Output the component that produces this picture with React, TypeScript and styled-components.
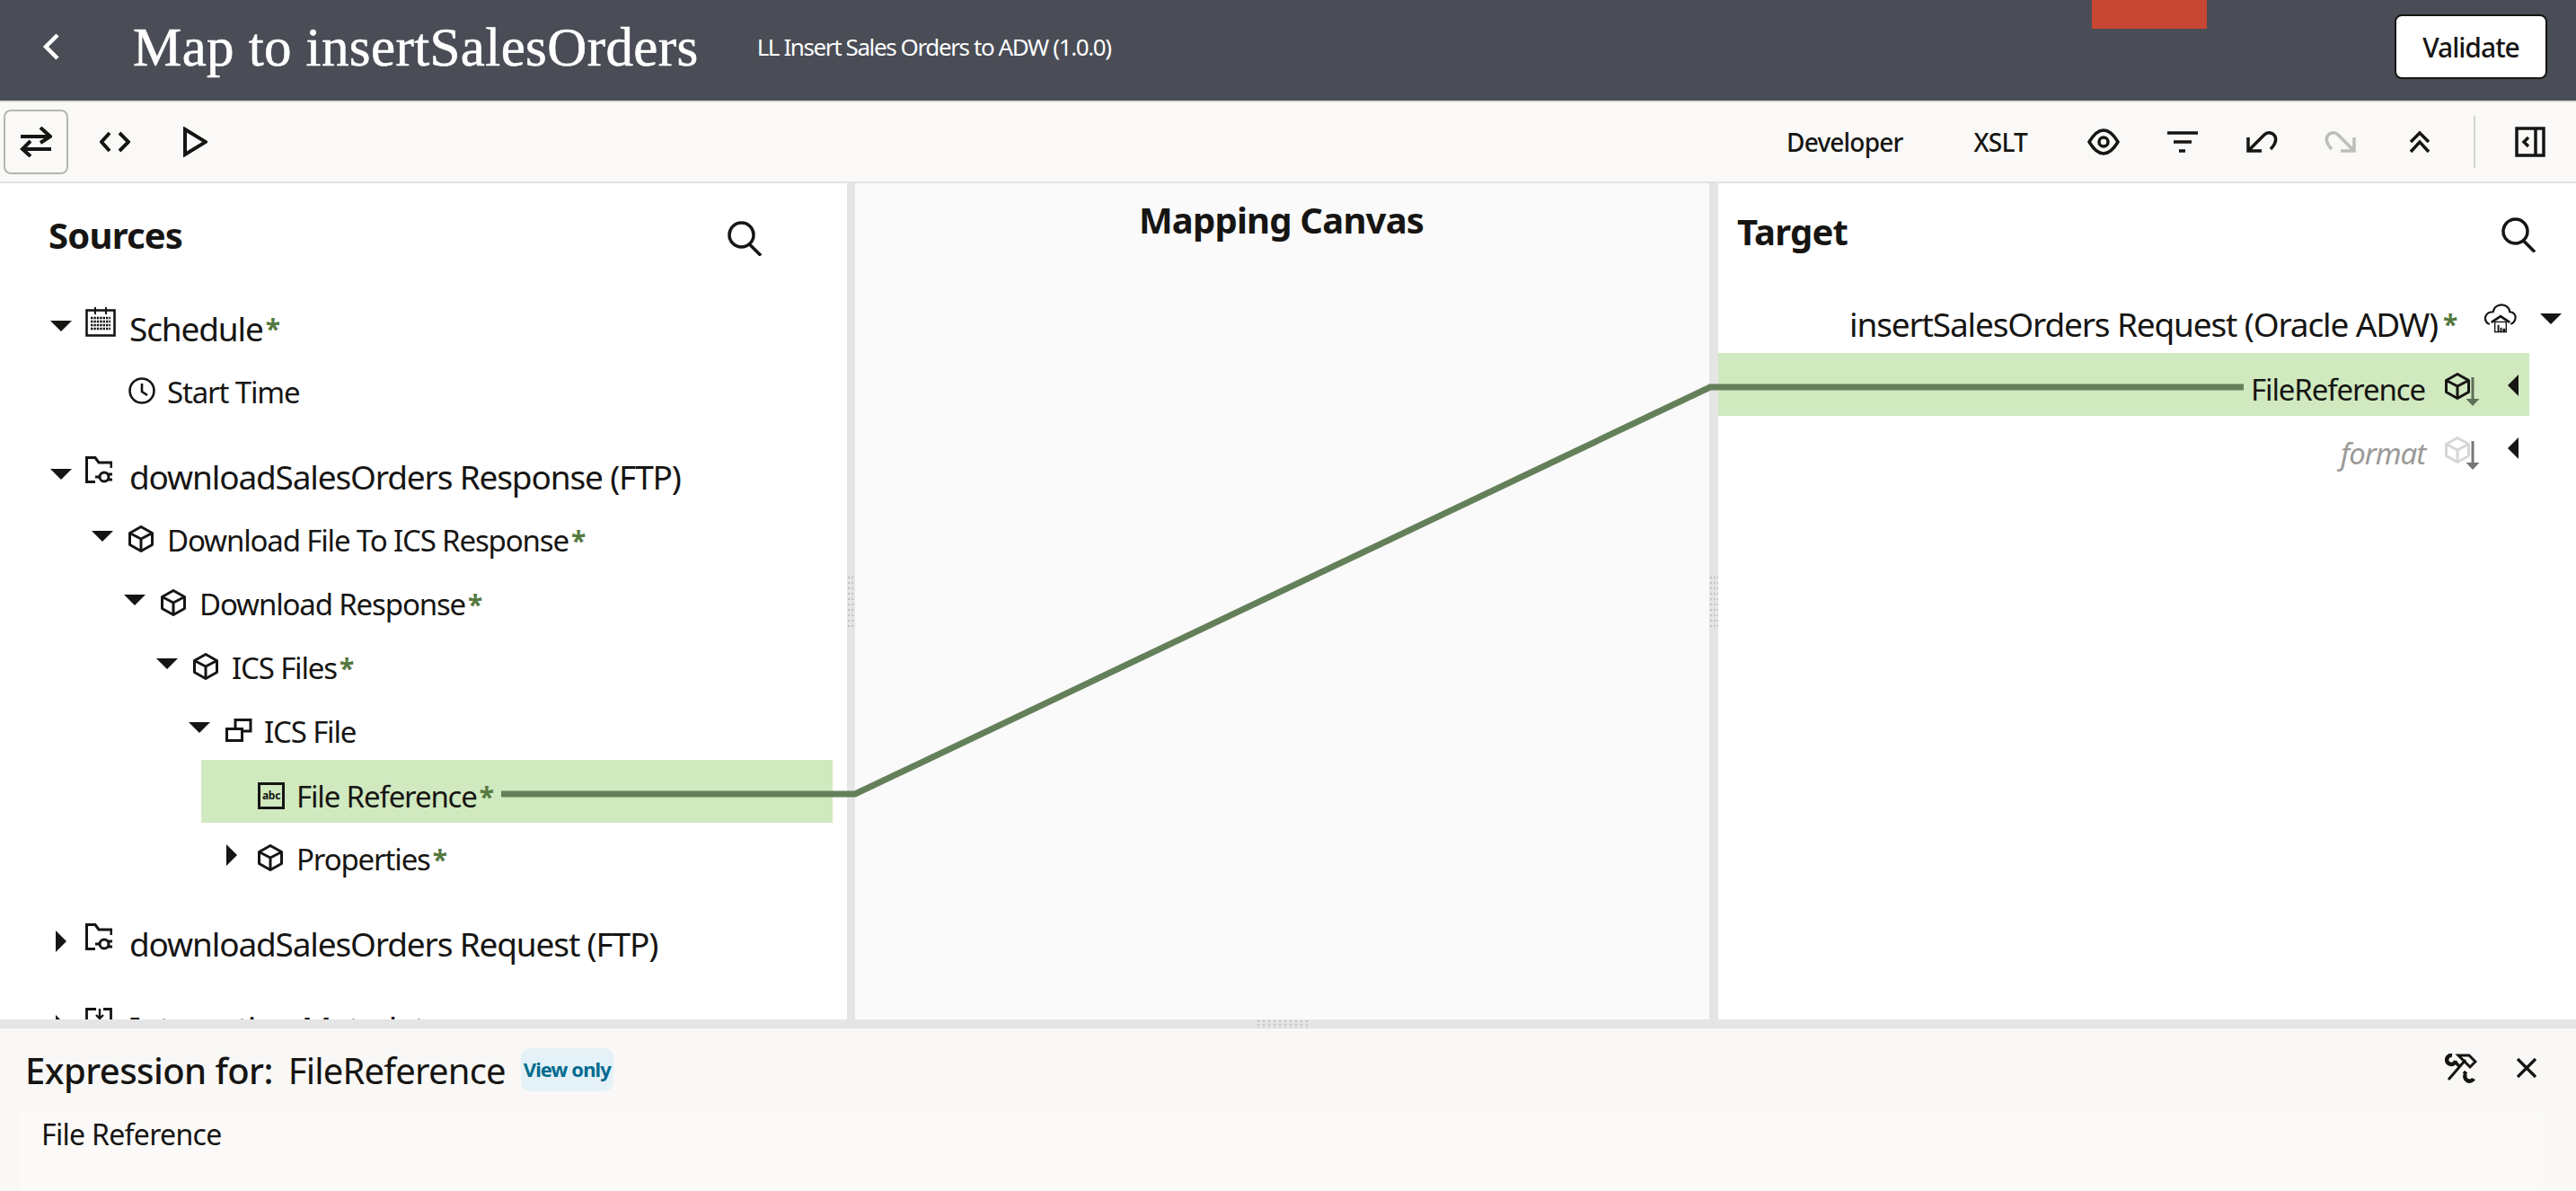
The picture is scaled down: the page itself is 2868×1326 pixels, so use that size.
import React from 'react';
import styled, { createGlobalStyle } from 'styled-components';

const GlobalStyle = createGlobalStyle`
  html, body {
    margin: 0;
    padding: 0;
    background: #fff;
    font-family: "Noto Sans", "Open Sans", sans-serif;
    color: #161513;
  }
`

const Page = styled.div`
  width: 2868px;
  height: 1326px;
  display: flex;
  flex-direction: column;
  overflow: hidden;
`

const Header = styled.header`
  position: relative;
  flex: none;
  height: 104px;
  padding-bottom: 8px;
  display: flex;
  align-items: center;
  background: #4a4d56;
  border-bottom: 2px solid #dfe0d2;
`

const BackButton = styled.button`
  border: 0;
  background: none;
  padding: 0;
  margin: 0 80px 0 46px;
  display: flex;
  color: #fff;
`

const Title = styled.h1`
  margin: 0 65px 0 0;
  font-family: "Liberation Serif", serif;
  font-weight: 400;
  font-size: 61px;
  letter-spacing: 0.4px;
  line-height: 1;
  color: #fff;
  -webkit-text-stroke: 0.6px #fff;
`

const Subtitle = styled.span`
  font-size: 26px;
  letter-spacing: -1.4px;
  color: #fff;
`

const RedTab = styled.div`
  position: absolute;
  top: 0;
  left: 2329px;
  width: 128px;
  height: 32px;
  background: #c74634;
`

const ValidateButton = styled.button`
  margin-left: auto;
  margin-right: 32px;
  width: 170px;
  height: 72px;
  border: 2px solid #161513;
  border-radius: 8px;
  background: #fff;
  font: 500 30px "Noto Sans", sans-serif;
  letter-spacing: -1px;
  color: #161513;
`

const Toolbar = styled.div`
  flex: none;
  height: 88px;
  display: flex;
  align-items: center;
  background: #faf9f7;
  border-bottom: 2px solid #e2e2e0;
`

const ActiveToolButton = styled.button`
  width: 72px;
  height: 72px;
  margin: 0 8px 0 4px;
  padding: 0;
  display: flex;
  align-items: center;
  justify-content: center;
  background: #faf9f7;
  border: 2px solid #b5b5b2;
  border-radius: 8px;
`

const ToolButton = styled.button`
  width: 88px;
  height: 72px;
  padding: 0;
  display: flex;
  align-items: center;
  justify-content: center;
  background: none;
  border: 0;
  color: #161513;
`

const ToolbarSpacer = styled.div`
  flex: 1;
`

const TextToolButton = styled.button`
  padding: 0 41px 0 38px;
  background: none;
  border: 0;
  font: 500 28px "Noto Sans", sans-serif;
  letter-spacing: -0.8px;
  color: #161513;
`

const ToolbarDivider = styled.div`
  width: 2px;
  height: 58px;
  margin: 0 44px 0 16px;
  background: #d4d4d2;
`

const PanelToggle = styled.button`
  display: flex;
  padding: 0;
  margin-right: 34px;
  background: none;
  border: 0;
  color: #161513;
`

const Workspace = styled.main`
  position: relative;
  flex: none;
  height: 931px;
  display: grid;
  grid-template-columns: 943px 9px 951px 10px 955px;
  overflow: hidden;
`

const ConnectorLayer = styled.svg`
  position: absolute;
  inset: 0;
  pointer-events: none;
`

const Gutter = styled.div`
  display: flex;
  align-items: center;
  background: #e5e5e5;
`

const GutterGrip = styled.div`
  width: 100%;
  height: 60px;
  background-image: radial-gradient(circle, #c4c4c4 1.3px, transparent 1.6px);
  background-size: 4px 6px;
`

const SourcesPanel = styled.section`
  overflow: hidden;
  background: #fff;
`

const SourcesHeader = styled.div`
  height: 120px;
  display: flex;
  align-items: flex-start;
  justify-content: space-between;
  box-sizing: border-box;
  padding: 30px 95px 0 54px;
`

const PanelTitle = styled.h2`
  margin: 0;
  font-size: 40px;
  line-height: 56px;
  font-weight: 700;
  letter-spacing: -0.8px;
`

const SearchButton = styled.button`
  display: flex;
  margin-top: 12px;
  padding: 0;
  background: none;
  border: 0;
  color: #161513;
`

const TreeGroup = styled.div`
  margin-bottom: 23px;
`

const Row = styled.div<{ $pad: number; $large?: boolean }>`
  height: 71px;
  box-sizing: border-box;
  padding: 11px 0 0 ${p => p.$pad}px;
  display: flex;
  align-items: center;
  font-size: ${p => (p.$large ? 37 : 33)}px;
  letter-spacing: -1.15px;
  white-space: nowrap;
`

const HighlightRow = styled(Row)`
  height: 70px;
  margin: 2px 16px -1px 224px;
  background: #d0e9bf;
`

const CaretSlot = styled.span<{ $width: number; $large?: boolean }>`
  flex: none;
  width: ${p => p.$width}px;
  display: flex;
  transform: translateY(${p => (p.$large ? -2 : -4)}px);
`

const CaretBox = styled.span`
  width: 24px;
  display: flex;
  justify-content: center;
`

const TypeIcon = styled.span<{ $large?: boolean }>`
  flex: none;
  width: ${p => (p.$large ? 49 : 43)}px;
  display: flex;
  transform: translateY(${p => (p.$large ? -7 : -1)}px);
`

const AbcIcon = styled.span`
  width: 30px;
  height: 30px;
  box-sizing: border-box;
  border: 3px solid #161513;
  display: flex;
  align-items: center;
  justify-content: center;
  font: 700 12px "Noto Sans", sans-serif;
  letter-spacing: -0.3px;
`

const Required = styled.span`
  color: #55783f;
  font-size: 30px;
  font-weight: 700;
  margin-left: 3px;
`

const TargetRequired = styled(Required)`
  margin-left: 6px;
`

const CanvasPanel = styled.section`
  background: #fafafa;
`

const CanvasTitle = styled.h2`
  margin: 13px 0 0;
  text-align: center;
  font-size: 40px;
  line-height: 56px;
  font-weight: 700;
  letter-spacing: -0.8px;
  padding-right: 2px;
`

const TargetPanel = styled.section`
  overflow: hidden;
  background: #fff;
`

const TargetHeader = styled.div`
  height: 117px;
  display: flex;
  align-items: flex-start;
  justify-content: space-between;
  box-sizing: border-box;
  padding: 26px 45px 0 21px;
`

const TargetRow = styled.div`
  height: 71px;
  box-sizing: border-box;
  padding: 7px 16px 0 0;
  display: flex;
  align-items: center;
  justify-content: flex-end;
  font-size: 37px;
  letter-spacing: -1.15px;
  white-space: nowrap;
`

const TargetField = styled.div<{ $mapped?: boolean; $muted?: boolean }>`
  height: ${p => (p.$mapped ? 70 : 71)}px;
  box-sizing: border-box;
  margin: ${p => (p.$mapped ? '1px 52px 0 0' : '0 52px 0 0')};
  padding: 11px 12px 0 0;
  display: flex;
  align-items: center;
  justify-content: flex-end;
  background: ${p => (p.$mapped ? '#d0e9bf' : 'transparent')};
  font-size: 33px;
  font-style: ${p => (p.$muted ? 'italic' : 'normal')};
  color: ${p => (p.$muted ? '#9b9a98' : '#161513')};
  letter-spacing: -1.1px;
`

const FieldIcon = styled.span`
  display: flex;
  margin: 0 30px 0 22px;
`

const CollapseCaret = styled.span`
  display: flex;
  transform: translateY(-5px);
`

const CloudIcon = styled.span`
  display: flex;
  margin: 0 26px 0 31px;
  transform: translateY(-6px);
`

const BottomGutter = styled.div`
  flex: none;
  height: 10px;
  display: flex;
  justify-content: center;
  padding-right: 12px;
  background: #e5e5e5;
`

const BottomGrip = styled.div`
  width: 60px;
  height: 100%;
  background-image: radial-gradient(circle, #c4c4c4 1.3px, transparent 1.6px);
  background-size: 6px 4px;
`

const ExpressionPanel = styled.section`
  flex: 1;
  min-height: 0;
  background: #f9f8f6;
`

const ExpressionHeader = styled.div`
  height: 92px;
  display: flex;
  align-items: center;
  padding: 0 43px 0 28px;
`

const ExpressionLabel = styled.span`
  font-size: 40px;
  font-weight: 500;
  letter-spacing: -0.55px;
  margin-right: 17px;
`

const ExpressionField = styled.span`
  font-size: 40px;
  letter-spacing: -0.8px;
  margin-right: 17px;
`

const ViewOnlyBadge = styled.span`
  width: 103px;
  height: 48px;
  display: flex;
  align-items: center;
  justify-content: center;
  padding-bottom: 2px;
  box-sizing: border-box;
  border-radius: 10px;
  background: #e4f1f7;
  color: #006b8f;
  font-size: 22px;
  font-weight: 700;
  letter-spacing: -0.9px;
`

const ExpressionActions = styled.div`
  margin-left: auto;
  display: flex;
  align-items: center;
  gap: 43px;
  padding-bottom: 4px;
`

const ExpressionBody = styled.div`
  height: 89px;
  margin: 0 36px 0 21px;
  padding: 8px 25px 0;
  box-sizing: border-box;
  background: #fbfaf8;
  border-radius: 8px 8px 0 0;
  font-size: 32px;
  line-height: 36px;
  letter-spacing: -0.7px;
`

const ink = '#161513'

const CaretDown = () => (
  <svg width="24" height="12" viewBox="0 0 24 12"><path d="M0 0H24L12 12Z" fill={ink} /></svg>
)

const CaretRight = () => (
  <svg width="12" height="24" viewBox="0 0 12 24"><path d="M0 0L12 12L0 24Z" fill={ink} /></svg>
)

const CaretLeft = () => (
  <svg width="12" height="24" viewBox="0 0 12 24"><path d="M12 0L0 12L12 24Z" fill={ink} /></svg>
)

const BackIcon = () => (
  <svg width="22" height="30" viewBox="0 0 22 30" fill="none" stroke="currentColor" strokeWidth="4.5">
    <path d="M18 2L5 15L18 28" />
  </svg>
)

const SwapIcon = () => (
  <svg width="36" height="34" viewBox="0 0 36 34" fill="none" stroke={ink} strokeWidth="4">
    <path d="M1 11H34M23 1L34 11L23 18" />
    <path d="M35 25H3M12 16L3 25L12 33" />
  </svg>
)

const CodeIcon = () => (
  <svg width="34" height="24" viewBox="0 0 34 24" fill="none" stroke="currentColor" strokeWidth="4">
    <path d="M11 2L2 12L11 22" />
    <path d="M22 2L32 12L22 22" />
  </svg>
)

const PlayIcon = () => (
  <svg width="30" height="34" viewBox="0 0 30 34" fill="none" stroke="currentColor" strokeWidth="4">
    <path d="M5 3L28 17L5 31Z" />
  </svg>
)

const EyeIcon = () => (
  <svg width="36" height="30" viewBox="0 0 36 30" fill="none" stroke="currentColor" strokeWidth="3.5">
    <path d="M2 15C8 5 13 2 18 2C23 2 28 5 34 15C28 25 23 28 18 28C13 28 8 25 2 15Z" />
    <circle cx="18" cy="15" r="5" />
  </svg>
)

const FilterIcon = () => (
  <svg width="34" height="26" viewBox="0 0 34 26" fill="none" stroke="currentColor" strokeWidth="3.5">
    <path d="M0 3H34M7 13H27M13 23H20" />
  </svg>
)

const UndoIcon = () => (
  <svg width="36" height="26" viewBox="0 0 36 26" fill="none" stroke="currentColor" strokeWidth="3.5">
    <path d="M3 8V23H18M3 23L21 5C25 1 31 3 33 7C35 12 32 17 28 21" />
  </svg>
)

const RedoIcon = () => (
  <svg width="36" height="26" viewBox="0 0 36 26" fill="none" stroke="#bdbdbb" strokeWidth="3.5">
    <path d="M33 8V23H18M33 23L15 5C11 1 5 3 3 7C1 12 4 17 8 21" />
  </svg>
)

const CollapseAllIcon = () => (
  <svg width="24" height="26" viewBox="0 0 24 26" fill="none" stroke="currentColor" strokeWidth="3.5">
    <path d="M2 13L12 3L22 13" />
    <path d="M2 24L12 13L22 24" />
  </svg>
)

const PanelIcon = () => (
  <svg width="34" height="34" viewBox="0 0 34 34" fill="none" stroke="currentColor" strokeWidth="3.5">
    <rect x="2" y="2" width="30" height="30" />
    <path d="M23 2V32" />
    <path d="M15 12L10 17L15 22" />
  </svg>
)

const SearchIcon = () => (
  <svg width="38" height="39" viewBox="0 0 38 39" fill="none" stroke="currentColor" strokeWidth="3.5">
    <circle cx="15.5" cy="15.5" r="13.5" />
    <path d="M24.5 26L37 38.5" />
  </svg>
)

const CalendarIcon = () => (
  <svg width="34" height="33" viewBox="0 0 34 33" fill="none" stroke={ink}>
    <rect x="1.5" y="3.5" width="31" height="28" strokeWidth="2.6" />
    <path d="M11 0V8M23 0V8" strokeWidth="2" />
    <path d="M6 12H28M6 16H28M6 20H28M6 24H28" strokeWidth="2.6" strokeDasharray="2.4 1" />
  </svg>
)

const ClockIcon = () => (
  <svg width="30" height="30" viewBox="0 0 30 30" fill="none" stroke={ink} strokeWidth="2.6">
    <circle cx="15" cy="15" r="13.5" />
    <path d="M15 7V16L21 20" />
  </svg>
)

const FolderPlugIcon = () => (
  <svg width="30" height="30" viewBox="0 0 30 30" fill="none" stroke={ink} strokeWidth="3">
    <path d="M11 28.5H1.5V1.5H11L15 7H29V13" />
    <path d="M11 23H16" />
    <circle cx="21" cy="23" r="5" />
    <path d="M25 20H30M25 26H30" />
  </svg>
)

const MetadataIcon = () => (
  <svg width="30" height="30" viewBox="0 0 30 30" fill="none" stroke={ink} strokeWidth="2.8">
    <path d="M12 1.500H1.500V28.500H28.500V1.500H20" />
    <path d="M16 1V12L12 8M16 12L20 8" strokeWidth="2.4" />
  </svg>
)

const CubeShape = ({ color }: { color: string }) => (
  <g fill="none" stroke={color} strokeWidth="3" strokeLinejoin="round">
    <path d="M14 1.5L26.5 8.5V21.5L14 28.5L1.5 21.5V8.5Z" />
    <path d="M1.5 8.5L14 15L26.5 8.5M14 15V28.5" />
  </g>
)

const CubeIcon = () => (
  <svg width="28" height="30" viewBox="0 0 28 30"><CubeShape color={ink} /></svg>
)

const CubeArrowIcon = ({ cube, arrow }: { cube: string; arrow: string }) => (
  <svg width="40" height="37" viewBox="0 0 40 37">
    <CubeShape color={cube} />
    <path d="M31 5V30" stroke={arrow} strokeWidth="3" />
    <path d="M23.500 29H38.500L31 37Z" fill={arrow} />
  </svg>
)

const StackIcon = () => (
  <svg width="30" height="26" viewBox="0 0 30 26" fill="none" stroke={ink} strokeWidth="3">
    <rect x="1.5" y="11.500" width="17" height="13" />
    <path d="M11 11V1.500H28V14H19" />
  </svg>
)

const CloudHouseIcon = () => (
  <svg width="36" height="33" viewBox="0 0 37 33">
    <path
      d="M6 23C1 22 0 16 2 13C4 9 8 9 10 9C11 3 16 1 20 1C25 1 29 5 29 9C33 9 36 12 35.500 16C35 20 33 22 30 23"
      fill="none"
      stroke={ink}
      strokeWidth="2.2"
    />
    <path d="M8 21L18.500 14L29 21" fill="none" stroke={ink} strokeWidth="2.8" />
    <rect x="12" y="20.500" width="13" height="11.500" fill="none" stroke={ink} strokeWidth="1.4" />
    <path d="M15 24H17V32H15ZM18 27H20V32H18ZM21 28H24V32H21Z" fill={ink} />
  </svg>
)

const ToolsIcon = () => (
  <svg width="36" height="33" viewBox="0 0 36 33" fill="none" stroke={ink}>
    <path d="M4 29L23 7" strokeWidth="3" />
    <path d="M15 2H27L34 9L28 15L21 8Z" strokeWidth="3" />
    <path d="M8 2A5 5 0 1 0 12 8" strokeWidth="4.5" />
    <path d="M11 9L16 14" strokeWidth="3.500" />
    <path d="M21 20L24 23" strokeWidth="3.500" />
    <path d="M23 23A5 5 0 1 0 32 28" strokeWidth="4.5" />
  </svg>
)

const CloseIcon = () => (
  <svg width="24" height="24" viewBox="0 0 24 24" fill="none" stroke={ink} strokeWidth="3.2">
    <path d="M2 2L22 22M22 2L2 22" />
  </svg>
)

const App: React.FC = () => {
  return (
    <Page>
      <GlobalStyle />
      <Header>
        <BackButton><BackIcon /></BackButton>
        <Title>Map to insertSalesOrders</Title>
        <Subtitle>LL Insert Sales Orders to ADW (1.0.0)</Subtitle>
        <RedTab />
        <ValidateButton>Validate</ValidateButton>
      </Header>
      <Toolbar>
        <ActiveToolButton><SwapIcon /></ActiveToolButton>
        <ToolButton><CodeIcon /></ToolButton>
        <ToolButton><PlayIcon /></ToolButton>
        <ToolbarSpacer />
        <TextToolButton>Developer</TextToolButton>
        <TextToolButton>XSLT</TextToolButton>
        <ToolButton><EyeIcon /></ToolButton>
        <ToolButton><FilterIcon /></ToolButton>
        <ToolButton><UndoIcon /></ToolButton>
        <ToolButton><RedoIcon /></ToolButton>
        <ToolButton><CollapseAllIcon /></ToolButton>
        <ToolbarDivider />
        <PanelToggle><PanelIcon /></PanelToggle>
      </Toolbar>
      <Workspace>
        <SourcesPanel>
          <SourcesHeader>
            <PanelTitle>Sources</PanelTitle>
            <SearchButton><SearchIcon /></SearchButton>
          </SourcesHeader>
          <TreeGroup>
            <Row $pad={56} $large>
              <CaretSlot $width={39} $large><CaretBox><CaretDown /></CaretBox></CaretSlot>
              <TypeIcon $large><CalendarIcon /></TypeIcon>
              Schedule<Required>*</Required>
            </Row>
            <Row $pad={143}>
              <TypeIcon><ClockIcon /></TypeIcon>
              Start Time
            </Row>
          </TreeGroup>
          <TreeGroup>
            <Row $pad={56} $large>
              <CaretSlot $width={39} $large><CaretBox><CaretDown /></CaretBox></CaretSlot>
              <TypeIcon $large><FolderPlugIcon /></TypeIcon>
              downloadSalesOrders Response (FTP)
            </Row>
            <Row $pad={102}>
              <CaretSlot $width={41}><CaretBox><CaretDown /></CaretBox></CaretSlot>
              <TypeIcon><CubeIcon /></TypeIcon>
              Download File To ICS Response<Required>*</Required>
            </Row>
            <Row $pad={138}>
              <CaretSlot $width={41}><CaretBox><CaretDown /></CaretBox></CaretSlot>
              <TypeIcon><CubeIcon /></TypeIcon>
              Download Response<Required>*</Required>
            </Row>
            <Row $pad={174}>
              <CaretSlot $width={41}><CaretBox><CaretDown /></CaretBox></CaretSlot>
              <TypeIcon><CubeIcon /></TypeIcon>
              ICS Files<Required>*</Required>
            </Row>
            <Row $pad={210}>
              <CaretSlot $width={41}><CaretBox><CaretDown /></CaretBox></CaretSlot>
              <TypeIcon><StackIcon /></TypeIcon>
              ICS File
            </Row>
            <HighlightRow $pad={63}>
              <TypeIcon><AbcIcon>abc</AbcIcon></TypeIcon>
              File Reference<Required>*</Required>
            </HighlightRow>
            <Row $pad={246}>
              <CaretSlot $width={41}><CaretBox><CaretRight /></CaretBox></CaretSlot>
              <TypeIcon><CubeIcon /></TypeIcon>
              Properties<Required>*</Required>
            </Row>
          </TreeGroup>
          <TreeGroup>
            <Row $pad={56} $large>
              <CaretSlot $width={39} $large><CaretBox><CaretRight /></CaretBox></CaretSlot>
              <TypeIcon $large><FolderPlugIcon /></TypeIcon>
              downloadSalesOrders Request (FTP)
            </Row>
          </TreeGroup>
          <TreeGroup>
            <Row $pad={56} $large>
              <CaretSlot $width={39} $large><CaretBox><CaretRight /></CaretBox></CaretSlot>
              <TypeIcon $large><MetadataIcon /></TypeIcon>
              Integration Metadata
            </Row>
          </TreeGroup>
        </SourcesPanel>
        <Gutter><GutterGrip /></Gutter>
        <CanvasPanel>
          <CanvasTitle>Mapping Canvas</CanvasTitle>
        </CanvasPanel>
        <Gutter><GutterGrip /></Gutter>
        <TargetPanel>
          <TargetHeader>
            <PanelTitle>Target</PanelTitle>
            <SearchButton><SearchIcon /></SearchButton>
          </TargetHeader>
          <TargetRow>
            insertSalesOrders Request (Oracle ADW)<TargetRequired>*</TargetRequired>
            <CloudIcon><CloudHouseIcon /></CloudIcon>
            <CollapseCaret><CaretDown /></CollapseCaret>
          </TargetRow>
          <TargetField $mapped>
            FileReference
            <FieldIcon><CubeArrowIcon cube={ink} arrow="#5f6f58" /></FieldIcon>
            <CollapseCaret><CaretLeft /></CollapseCaret>
          </TargetField>
          <TargetField $muted>
            format
            <FieldIcon><CubeArrowIcon cube="#d6d6d4" arrow="#777775" /></FieldIcon>
            <CollapseCaret><CaretLeft /></CollapseCaret>
          </TargetField>
        </TargetPanel>
        <ConnectorLayer width="2868" height="931" viewBox="0 0 2868 931" fill="none">
          <path d="M558 680H952L1904 227H2498" stroke="#64805a" strokeWidth="7" />
        </ConnectorLayer>
      </Workspace>
      <BottomGutter><BottomGrip /></BottomGutter>
      <ExpressionPanel>
        <ExpressionHeader>
          <ExpressionLabel>Expression for:</ExpressionLabel>
          <ExpressionField>FileReference</ExpressionField>
          <ViewOnlyBadge>View only</ViewOnlyBadge>
          <ExpressionActions>
            <ToolsIcon />
            <CloseIcon />
          </ExpressionActions>
        </ExpressionHeader>
        <ExpressionBody>File Reference</ExpressionBody>
      </ExpressionPanel>
    </Page>
  )
}

export default App
